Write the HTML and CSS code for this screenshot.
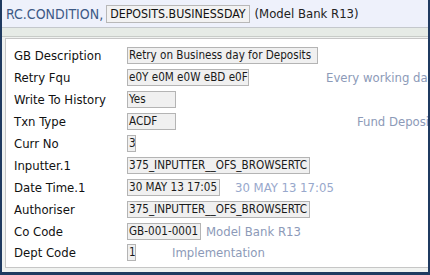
FILE: index.html
```html
<!DOCTYPE html>
<html lang="en">
<head>
    <meta charset="UTF-8">
    <title>RC.CONDITION</title>
    <link rel="stylesheet" href="styles.css">
</head>
<body>
    <div class="frame">
        <div class="header">
            <span class="app">RC.CONDITION,</span>
            <span class="key">DEPOSITS.BUSINESSDAY</span>
            <span class="company">(Model Bank R13)</span>
        </div>
        <div class="band"></div>
        <div class="panel">
            <div class="row">
                <span class="label">GB Description</span>
                <span class="value w-desc">Retry on Business day for Deposits</span>
            </div>
            <div class="row">
                <span class="label">Retry Fqu</span>
                <span class="value w-fqu">e0Y e0M e0W eBD e0F</span>
                <span class="enri e-fqu">Every working day</span>
            </div>
            <div class="row">
                <span class="label">Write To History</span>
                <span class="value w-short">Yes</span>
            </div>
            <div class="row">
                <span class="label">Txn Type</span>
                <span class="value w-short">ACDF</span>
                <span class="enri e-txn">Fund Deposit</span>
            </div>
            <div class="row">
                <span class="label">Curr No</span>
                <span class="value w-tiny">3</span>
            </div>
            <div class="row">
                <span class="label">Inputter.1</span>
                <span class="value w-user">375_INPUTTER__OFS_BROWSERTC</span>
            </div>
            <div class="row">
                <span class="label">Date Time.1</span>
                <span class="value w-date">30 MAY 13 17:05</span>
                <span class="enri e-date">30 MAY 13 17:05</span>
            </div>
            <div class="row">
                <span class="label">Authoriser</span>
                <span class="value w-user">375_INPUTTER__OFS_BROWSERTC</span>
            </div>
            <div class="row">
                <span class="label">Co Code</span>
                <span class="value w-co">GB-001-0001</span>
                <span class="enri e-co">Model Bank R13</span>
            </div>
            <div class="row">
                <span class="label">Dept Code</span>
                <span class="value w-tiny">1</span>
                <span class="enri e-dept">Implementation</span>
            </div>
        </div>
    </div>
</body>
</html>
```

FILE: styles.css
```css
body {
    margin: 0;
    font-family: "DejaVu Sans Condensed", "DejaVu Sans", sans-serif;
    font-size: 12px;
    color: #1a1a1a;
    background-color: #fff;
}

.frame {
    width: 430px;
    height: 275px;
    box-sizing: border-box;
    border-left: 2px solid #1f3a60;
    border-right: 2px solid #1f3a60;
    border-bottom: 3px solid #1f3a60;
    background-color: #f0f2f0;
    overflow: hidden;
    display: flex;
    flex-direction: column;
}

.header {
    height: 27px;
    flex-shrink: 0;
    display: flex;
    align-items: center;
    padding-left: 4px;
    background-color: #eef1fb;
    border-bottom: 1px solid #c4c8cc;
    white-space: nowrap;
}

.app {
    font-size: 14px;
    color: #3d5a86;
}

.key {
    margin-left: 3px;
    padding: 1px 3px;
    font-size: 12.3px;
    background-color: #f2f2f2;
    border: 1px solid #b8b8b8;
    color: #111;
}

.company {
    margin-left: 5px;
    font-size: 13px;
    color: #222;
}

.band {
    height: 8px;
    flex-shrink: 0;
    background-color: #e6ebe6;
    border-bottom: 1px solid #c8ccc8;
}

.panel {
    flex: 1;
    margin: 1px 0 4px 3px;
    padding-top: 6px;
    padding-left: 8px;
    background-color: #fff;
    border: 1px solid #c6c6c6;
    border-right: none;
    white-space: nowrap;
    overflow: hidden;
}

.row {
    display: flex;
    align-items: center;
    height: 21.9px;
}

.label {
    width: 113px;
    flex-shrink: 0;
    font-size: 13px;
    color: #111;
}

.value {
    box-sizing: border-box;
    height: 17px;
    line-height: 15px;
    padding-left: 1px;
    font-size: 11.6px;
    background-color: #f0f0f0;
    border: 1px solid #b4b4b4;
    overflow: hidden;
    flex-shrink: 0;
}

.w-desc { width: 191px; }
.w-fqu { width: 122px; }
.w-date { width: 93px; }
.w-short { width: 49px; }
.w-tiny { width: 9px; }
.w-user { width: 183px; }
.w-co { width: 74px; }

.enri {
    font-size: 13px;
    color: #8c9ab8;
}

.e-fqu { margin-left: 77px; }
.e-txn { margin-left: 181px; }
.e-date { margin-left: 15px; color: #98a8cc; }
.e-co { margin-left: 5px; }
.e-dept { margin-left: 36px; }
```
